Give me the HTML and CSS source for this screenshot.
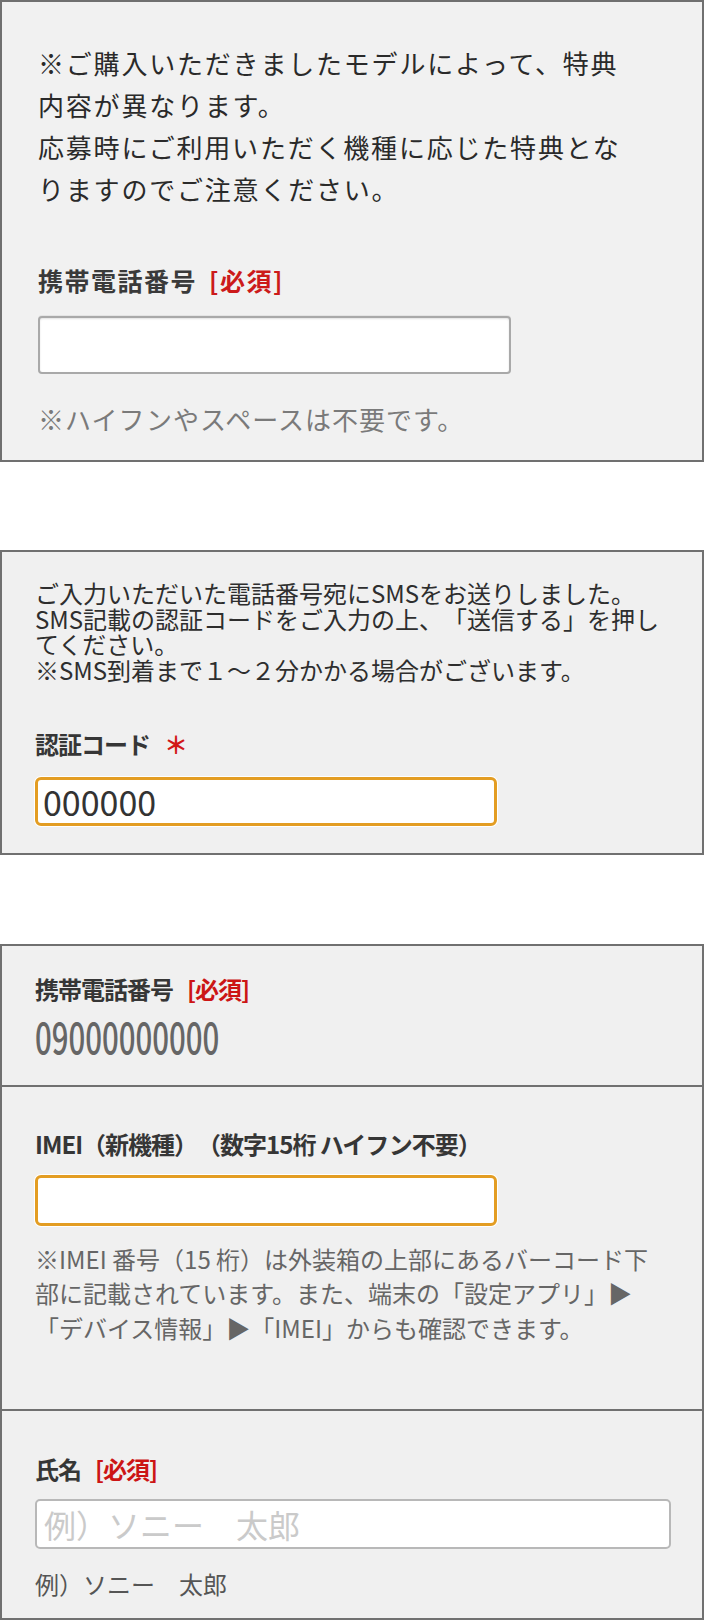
FILE: index.html
```html
<!DOCTYPE html>
<html lang="ja">
<head>
<meta charset="utf-8">
<title>フォーム</title>
<link rel="stylesheet" href="styles.css">
</head>
<body>
<section class="panel panel-a">
  <p class="notice-a">※ご購入いただきましたモデルによって、特典<br>内容が異なります。<br>応募時にご利用いただく機種に応じた特典とな<br>りますのでご注意ください。</p>
  <label class="label-a">携帯電話番号<span class="req-a">[必須]</span></label>
  <input class="input-a" type="tel">
  <p class="hint-a">※ハイフンやスペースは不要です。</p>
</section>

<section class="panel panel-b">
  <p class="notice-b">ご入力いただいた電話番号宛にSMSをお送りしました。<br>SMS記載の認証コードをご入力の上、「送信する」を押し<br>てください。<br>※SMS到着まで１～２分かかる場合がございます。</p>
  <label class="label-b">認証コード<span class="star">＊</span></label>
  <input class="input-orange input-code" type="text" value="000000">
</section>

<section class="panel panel-c">
  <div class="row row-phone">
    <div class="label-b">携帯電話番号<span class="req-b">[必須]</span></div>
    <div class="value"><span class="digits">09000000000</span></div>
  </div>
  <div class="row row-imei">
    <label class="label-b">IMEI（新機種）（数字15桁 ハイフン不要）</label>
    <input class="input-orange input-imei" type="text">
    <p class="note">※IMEI 番号（15 桁）は外装箱の上部にあるバーコード下<br>部に記載されています。また、端末の「設定アプリ」▶<br>「デバイス情報」▶「IMEI」からも確認できます。</p>
  </div>
  <div class="row row-name">
    <label class="label-b">氏名<span class="req-b">[必須]</span></label>
    <input class="input-name" type="text" placeholder="例）ソニー　太郎">
    <p class="name-hint">例）ソニー　太郎</p>
  </div>
</section>
</body>
</html>
```

FILE: styles.css
```css
* { box-sizing: border-box; }

html, body {
  margin: 0;
  padding: 0;
  background: #ffffff;
}

body {
  width: 704px;
  font-family: "Noto Sans CJK JP", "Noto Sans", sans-serif;
  color: #333333;
  text-spacing-trim: space-all;
}

p { margin: 0; }

.panel {
  border: 2px solid #707070;
  background: #f0f0f0;
}

/* ---------- panel A ---------- */
.panel-a {
  height: 462px;
  padding: 40px 38px 0 36px;
  background: #f1f1f1;
}

.notice-a {
  font-size: 26px;
  line-height: 42px;
  letter-spacing: 1.8px;
  color: #2a2a2a;
  white-space: nowrap;
}

.label-a {
  display: block;
  margin-top: 52px;
  font-size: 25px;
  line-height: 36px;
  font-weight: bold;
  letter-spacing: 1.5px;
  color: #3a3a3a;
}

.req-a {
  margin-left: 12px;
  color: #cc1a1a;
}

.input-a {
  display: block;
  margin-top: 18px;
  width: 473px;
  height: 58px;
  border: 2px solid #a9a9a9;
  border-radius: 4px;
  background: #ffffff;
  box-shadow: inset 0 1px 2px rgba(0,0,0,0.12), 0 -1px 0 #e4e4e4;
  outline: none;
}

.hint-a {
  margin-top: 27px;
  font-size: 26px;
  line-height: 36px;
  letter-spacing: 1px;
  color: #7a7a7a;
}

/* ---------- panel B ---------- */
.panel-b {
  margin-top: 88px;
  height: 305px;
  padding: 28px 33px 0 33px;
}

.notice-b {
  font-size: 24px;
  line-height: 25.5px;
  color: #2e2e2e;
  white-space: nowrap;
}

.label-b {
  display: block;
  font-size: 24px;
  line-height: 30px;
  font-weight: bold;
  letter-spacing: -1px;
  color: #363636;
}

.panel-b .label-b { margin-top: 47px; }

.star {
  margin-left: 14px;
  color: #d21818;
  font-weight: bold;
}

.input-orange {
  display: block;
  margin-top: 18px;
  width: 462px;
  height: 49px;
  border: 3px solid #e39d23;
  border-radius: 6px;
  background: #ffffff;
  box-shadow: 0 0 0 1px #ffffff;
  outline: none;
  font-family: "Noto Sans CJK JP", "Noto Sans", sans-serif;
}

.input-code {
  padding: 0 5px;
  font-size: 34px;
  color: #333333;
}

/* ---------- panel C ---------- */
.panel-c {
  margin-top: 89px;
  height: 676px;
  padding: 0;
}

.row {
  padding-left: 33px;
  padding-right: 33px;
}

.row + .row { border-top: 2px solid #707070; }

.row-phone {
  height: 139px;
  padding-top: 27.5px;
}

.req-b {
  margin-left: 14px;
  color: #cc1515;
}

.value {
  margin-top: 10.5px;
  line-height: 44px;
  height: 44px;
}

.digits {
  display: inline-block;
  font-size: 42px;
  font-weight: 500;
  color: #666666;
  transform: scaleX(0.7);
  transform-origin: left center;
}

.row-imei {
  height: 324px;
  padding-top: 41.5px;
}

.input-imei {
  margin-top: 16.5px;
  height: 51px;
}

.note {
  margin-top: 15.75px;
  font-size: 24px;
  line-height: 34.5px;
  color: #666666;
  white-space: nowrap;
}

.row-name {
  height: 209px;
  padding-top: 43px;
}

.input-name {
  display: block;
  margin-top: 15px;
  width: 636px;
  height: 50px;
  padding: 0 7px;
  border: 2px solid #b8b8b8;
  border-radius: 5px;
  background: #ffffff;
  outline: none;
  font-family: "Noto Sans CJK JP", "Noto Sans", sans-serif;
  font-size: 32px;
  color: #333333;
}

.input-name::placeholder { color: #cacaca; }

.name-hint {
  margin-top: 20px;
  font-size: 24px;
  line-height: 30px;
  color: #555555;
}
```
